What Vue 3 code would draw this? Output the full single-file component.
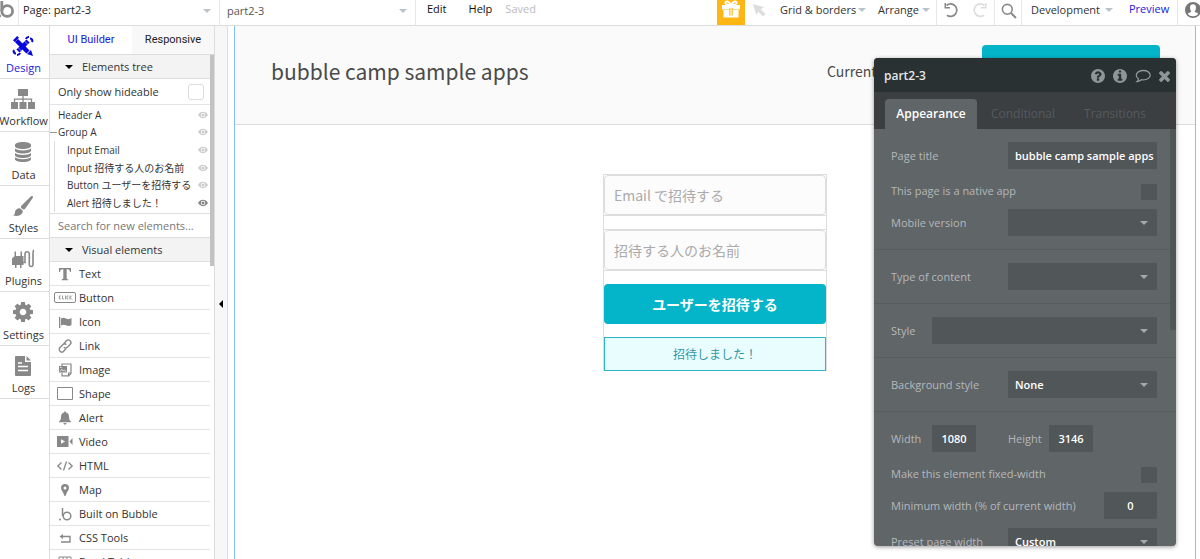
<script setup>
import { ref } from 'vue'

const circle = 'q0 209-103 385.5t-279.5 279.5-385.5 103-385.5-103-279.5-279.5-103-385.5 103-385.5 279.5-279.5 385.5-103 385.5 103 279.5 279.5 103 385.5z'

const icons = {
  design: ['0 0 20 20', '<path d="M3.500 4.500 15 16" stroke="currentColor" stroke-width="4.500"/><path d="M0 4.200 4.200 0 6 1.800 1.800 6z"/><path d="m14 18 4-4 2 6z"/><path d="M5 15 15 5" stroke="currentColor" stroke-width="4.500"/><path d="M3 17.500a2.300 2.300 0 0 1-2-3.500M17 2.500a2.300 2.300 0 0 1 2 3.500M13 3a3 3 0 0 1 3-2M7 17a3 3 0 0 1-3 2" fill="none" stroke="currentColor" stroke-width="2.200"/><path d="m4.500 11 4.500 4.500M11 4.500 15.500 9" stroke="#fff" stroke-width=".5"/>'],
  workflow: ['0 0 24 20', '<path d="M7 0h10v7H7zM0 13h7v7H0zM8.500 13h7v7h-7zM17 13h7v7h-7z"/><path d="M12 7v6M3.500 13v-2.800h17V13" fill="none" stroke="currentColor" stroke-width="1.300"/>'],
  data: ['0 0 16 20', '<path d="M0 2.800C0 1.200 3.600 0 8 0s8 1.200 8 2.800v1.400C16 5.800 12.400 7 8 7S0 5.800 0 4.200zM0 6.600C1.500 7.900 4.500 8.600 8 8.600s6.500-.7 8-2v2.200c0 1.500-3.600 2.700-8 2.700S0 10.300 0 8.800zM0 11c1.500 1.300 4.500 2 8 2s6.500-.7 8-2v2.200c0 1.500-3.600 2.700-8 2.700s-8-1.200-8-2.700zM0 15.200c1.500 1.300 4.500 2 8 2s6.500-.7 8-2v2c0 1.600-3.600 2.800-8 2.800s-8-1.200-8-2.800z"/>'],
  styles: ['0 0 20 20', '<path d="M19.600.3c.6.500.5 1.200.1 1.800l-7.400 10.400c-.7 1-1.800 1.300-2.800.6l-1-.9c-.8-.8-.7-1.900.1-2.800L17.800.5c.6-.5 1.300-.6 1.800-.2zM7 12.200l2.700 2.400c.5 2.300-1.500 4.800-4.500 5.200-1.900.3-3.800 0-5.200-.6 2-.7 1.700-2 2.100-3.800.5-2 2.700-3.600 4.900-3.200z"/>'],
  plugins: ['0 0 22 20', '<path d="M2.500 2.500H4V7h4.500V2.500H10V7h1.500v9H9.500v3H8v-3H4.500v3H3v-3H0V9.500L2.500 7z"/><path d="M11 13.500h2V4.500a2.200 2.200 0 0 1 4.300 0V16a1.900 1.900 0 0 0 3.700 0V4.500c0-2 0-3 1-3.500" fill="none" stroke="currentColor" stroke-width="1.600"/>'],
  settings: ['128 128 1536 1536', '<path d="M1152 896q0-106-75-181t-181-75-181 75-75 181 75 181 181 75 181-75 75-181zm512-109v222q0 12-8 23t-20 13l-185 28q-19 54-39 91 35 50 107 138 10 12 10 25t-9 23q-27 37-99 108t-94 71q-12 0-26-9l-138-108q-44 23-91 38-16 136-29 186-7 28-36 28h-222q-14 0-24.500-8.500t-11.500-21.500l-28-184q-49-16-90-37l-141 107q-10 9-25 9-14 0-25-11-126-114-165-168-7-10-7-23 0-12 8-23 15-21 51-66.500t54-70.500q-27-50-41-99l-183-27q-13-2-21-12.500t-8-23.500v-222q0-12 8-23t19-13l186-28q14-46 39-92-40-57-107-138-10-12-10-24 0-10 9-23 26-36 98.500-107.500t94.500-71.500q13 0 26 10l138 107q44-23 91-38 16-136 29-186 7-28 36-28h222q14 0 24.500 8.500t11.500 21.500l28 184q49 16 90 37l142-107q9-9 24-9 13 0 25 10 129 119 165 170 7 8 7 22 0 12-8 23-15 21-51 66.500t-54 70.500q26 50 41 98l183 28q13 2 21 12.500t8 23.500z"/>'],
  logs: ['0 0 16 20', '<path d="M1 0h9v6h6v13a1 1 0 0 1-1 1H1a1 1 0 0 1-1-1V1a1 1 0 0 1 1-1zm10.500 0L16 4.500h-4.500z"/><path d="M3 7h4M3 10.500h10M3 14.500h10" stroke="#fff" stroke-width="1.300"/>'],
  text: ['0 0 14 14', '<path d="M1 1h12v4h-1c-.3-2-1-2.700-2.800-2.700H8.700v9c0 .9.400 1.100 1.700 1.200v.8H3.600v-.8c1.300-.1 1.700-.3 1.700-1.200v-9h-.5C3 2.300 2.300 3 2 5H1z"/>'],
  button: ['0 0 22 11', '<rect x=".5" y=".5" width="21" height="10" rx="1.500" fill="none" stroke="currentColor"/><path d="M7 4H5.300v3H7M8.500 3.500V7h1.600M11.500 3.500v4M14.500 4H13v3h1.500M16 3.500v4M18 3.500l-2 2 2 2" fill="none" stroke="currentColor" stroke-width=".8"/>'],
  icon: ['0 0 14 14', '<path d="M1 2h1.300v11H1zM3 3.500c2-1.200 3.500-1 5 0s3 .9 5.500-.5v7c-2 1.100-3.500 1.300-5.500.3s-3-.8-5 .2z"/>'],
  link: ['0 0 14 14', '<path d="m6 4.500 2.400-2.700a2.600 2.600 0 0 1 3.700 3.700L9.300 8.300a2.500 2.500 0 0 1-3.500 0M8 9.600l-2.300 2.600A2.600 2.600 0 0 1 2 8.500l2.800-2.800a2.500 2.500 0 0 1 3.500 0" fill="none" stroke="currentColor" stroke-width="1.400"/>'],
  image: ['0 0 14 14', '<path d="M4 3V1h9v9.500l-2.300 2.300H4V10M13 10h-2.500v3" fill="none" stroke="currentColor" stroke-width="1.200"/><path d="M1 3h8v6.500H1z"/><path d="m2 8.500 1.800-2.200L5.300 8l1-1L8 8.500M2 4.500h1.500" fill="none" stroke="#fff" stroke-width=".8"/>'],
  shape: ['0 0 16 13', '<path d="M.5.500h15v12H.5z" fill="none" stroke="currentColor"/>'],
  alert: ['0 0 14 14', '<path d="M7 .5c.7 0 1 .5 1 1 2 .5 3 2 3 4 0 3 .7 4 2 5v.7H1v-.7c1.300-1 2-2 2-5 0-2 1-3.500 3-4 0-.5.300-1 1-1zM5.500 12h3c0 1-.7 1.500-1.500 1.500s-1.500-.5-1.500-1.500z"/>'],
  video: ['0 0 16 11', '<path d="M0 0h11.500v11H0zM12.500 5.500 15.500 2v7z"/><path d="M4 3.200 8 5.500 4 7.800z" fill="#fff"/>'],
  html: ['0 0 16 10', '<path d="m4.500 1.500-3.700 3.500 3.700 3.500M11.500 1.500l3.700 3.500-3.700 3.500M9.500.5l-3 9" fill="none" stroke="currentColor" stroke-width="1.300"/>'],
  map: ['0 0 14 14', '<path fill-rule="evenodd" d="M7 1a4 4 0 0 1 4 4c0 2.200-2.500 4.300-3.300 7.500-.2.700-1.200.7-1.400 0C5.500 9.300 3 7.200 3 5a4 4 0 0 1 4-4zm0 2.500a1.500 1.500 0 1 0 0 3 1.500 1.500 0 0 0 0-3z"/>'],
  bubble: ['0 0 14 14', '<circle cx="9" cy="9" r="3.800" fill="none" stroke="currentColor" stroke-width="1.500"/><path d="M4.500 1v8" stroke="currentColor" stroke-width="1.500"/><circle cx="2" cy="12.500" r="1"/>'],
  css: ['0 0 14 14', '<path d="M4.500 5.500H12V11H3" fill="none" stroke="currentColor" stroke-width="1.400"/><path d="M1.500 5.500 5 3v5z"/>'],
  table: ['0 0 14 14', '<path d="M1 2h12v10H1zM1 5.500h12M5 2v10M9 2v10" fill="none" stroke="currentColor"/>'],
  eye: ['0 0 10 8', '<path fill-rule="evenodd" d="M0 4c1.300-2 3-3.200 5-3.200S8.700 2 10 4C8.700 6 7 7.200 5 7.200S1.300 6 0 4zm5-2.200a2.200 2.200 0 1 0 0 4.400 2.200 2.200 0 0 0 0-4.400z"/><circle cx="5" cy="4" r="1.500"/>'],
  gift: ['0 0 20 18', '<path d="M1 5h18v4.500H1zM2.500 10h15v7.500h-15z"/><path d="M9 5C5 5 4.300 3.800 4.300 2.500S7.600.3 10 5C12.400.3 15.700 1.200 15.700 2.500S15 5 11 5" fill="none" stroke="currentColor" stroke-width="1.800"/><path d="M8.300 8h3.400v7.500H8.300z" fill="#fdb614"/><path d="M9.400 8h1.200v7.500H9.400z"/>'],
  pointer: ['0 0 14 14', '<path d="M1 1 12 4.300 8.700 6.300l4.800 4.800-2.400 2.400-4.800-4.800-2 3.300z"/>'],
  undo: ['0 0 16 16', '<path d="M3.500 3.500a6.200 6.200 0 1 1 .5 9.700" fill="none" stroke="currentColor" stroke-width="1.700"/><path d="M1.500 1v5.500H7V5H3V1z"/>'],
  search: ['0 0 16 16', '<circle cx="6.300" cy="6.300" r="4.900" fill="none" stroke="currentColor" stroke-width="1.600"/><path d="m10 10 5 5" stroke="currentColor" stroke-width="2"/>'],
  user: ['0 0 16 16', '<path fill-rule="evenodd" d="M8 0a8 8 0 1 1 0 16A8 8 0 0 1 8 0zM5 5.500C5 8 6 9 6.300 9.500c.3 1-3 1-3.500 2.500A6.300 6.300 0 0 0 8 14.300a6.300 6.300 0 0 0 5.200-2.300c-.5-1.500-3.800-1.500-3.500-2.500C10 9 11 8 11 5.500 11 3.500 9.700 2.300 8 2.300S5 3.500 5 5.500z"/>'],
  help: ['128 128 1536 1536', `<path d="M1024 1376v-192q0-14-9-23t-23-9h-192q-14 0-23 9t-9 23v192q0 14 9 23t23 9h192q14 0 23-9t9-23zm256-672q0-88-55.500-163t-138.500-116-170-41q-243 0-371 213-15 24 8 42l132 100q7 6 19 6 16 0 25-12 53-68 86-92 34-24 86-24 48 0 85.500 26t37.500 59q0 38-20 61t-68 45q-63 28-115.500 86.500t-52.500 125.500v36q0 14 9 23t23 9h192q14 0 23-9t9-23q0-19 21.500-49.500t54.500-49.500q32-18 49-28.500t46-35 44.500-48 28-60.500 12.500-81zm384 192${circle}"/>`],
  info: ['128 128 1536 1536', `<path d="M1152 1376v-160q0-14-9-23t-23-9h-96v-512q0-14-9-23t-23-9h-320q-14 0-23 9t-9 23v160q0 14 9 23t23 9h96v320h-96q-14 0-23 9t-9 23v160q0 14 9 23t23 9h448q14 0 23-9t9-23zm-128-896v-160q0-14-9-23t-23-9h-192q-14 0-23 9t-9 23v160q0 14 9 23t23 9h192q14 0 23-9t9-23zm640 416${circle}"/>`],
  comment: ['0 0 16 14', '<path d="M8.300 1.500c3.800 0 6.900 2 6.900 4.700s-3.100 4.700-6.900 4.700c-.7 0-1.300 0-1.900-.2-1 1-2.400 1.600-4.200 1.800.9-.8 1.200-1.700 1.200-2.800C2.200 8.800 1.300 7.600 1.300 6.200c0-2.700 3.100-4.700 7-4.700z" fill="none" stroke="currentColor" stroke-width="1.300"/>'],
  close: ['302 366 1188 1188', '<path d="M1490 1322q0 40-28 68l-136 136q-28 28-68 28t-68-28l-294-294-294 294q-28 28-68 28t-68-28l-136-136q-28-28-28-68t28-68l294-294-294-294q-28-28-28-68t28-68l136-136q28-28 68-28t68 28l294 294 294-294q28-28 68-28t68 28l136 136q28 28 28 68t-28 68l-294 294 294 294q28 28 28 68z"/>'],
}

const rail = [
  ['design', 'Design'], ['workflow', 'Workflow'], ['data', 'Data'], ['styles', 'Styles'],
  ['plugins', 'Plugins'], ['settings', 'Settings'], ['logs', 'Logs'],
]
const tree = [
  { name: 'Header A', level: 0 },
  { name: 'Group A', level: 0, open: true },
  { name: 'Input Email', level: 1 },
  { name: 'Input 招待する人のお名前', level: 1 },
  { name: 'Button ユーザーを招待する', level: 1 },
  { name: 'Alert 招待しました！', level: 1, strong: true },
]
const elements = [
  ['text', 'Text', 14], ['button', 'Button', 22], ['icon', 'Icon', 14], ['link', 'Link', 14],
  ['image', 'Image', 14], ['shape', 'Shape', 16], ['alert', 'Alert', 14], ['video', 'Video', 16],
  ['html', 'HTML', 16], ['map', 'Map', 14], ['bubble', 'Built on Bubble', 14],
  ['css', 'CSS Tools', 14], ['table', 'Excel Table', 14],
]
const title = ref('bubble camp sample apps')
const width = ref('1080')
const height = ref('3146')
const minWidth = ref('0')
</script>

<template>
  <div class="app">
    <header class="topbar">
      <svg class="logo" viewBox="0 0 18 24" aria-hidden="true">
        <circle cx="7.200" cy="11" r="5.400" fill="none" stroke="currentColor" stroke-width="2.800" />
        <path d="M1.800 1v10" stroke="currentColor" stroke-width="2.800" />
        <circle cx="-.5" cy="16" r="1.500" />
      </svg>
      <div class="pick dark"><select aria-label="Page"><option>Page: part2-3</option></select><i class="caret"></i></div>
      <div class="pick second"><select aria-label="Element"><option>part2-3</option></select><i class="caret"></i></div>
      <nav class="menu">
        <a href="#">Edit</a><a href="#">Help</a><span class="saved">Saved</span>
      </nav>
      <button class="gift" aria-label="Gift"><svg :viewBox="icons.gift[0]" v-html="icons.gift[1]"></svg></button>
      <button class="pointer" aria-label="Select"><svg :viewBox="icons.pointer[0]" v-html="icons.pointer[1]"></svg></button>
      <button class="drop grid">Grid &amp; borders<i class="caret"></i></button>
      <button class="drop arrange">Arrange<i class="caret"></i></button>
      <div class="history">
        <button aria-label="Undo"><svg :viewBox="icons.undo[0]" v-html="icons.undo[1]"></svg></button>
        <button class="redo" aria-label="Redo"><svg :viewBox="icons.undo[0]" v-html="icons.undo[1]"></svg></button>
      </div>
      <button class="find" aria-label="Search"><svg :viewBox="icons.search[0]" v-html="icons.search[1]"></svg></button>
      <button class="drop version">Development<i class="caret"></i></button>
      <a class="preview" href="#">Preview</a>
      <button class="user" aria-label="User"><svg :viewBox="icons.user[0]" v-html="icons.user[1]"></svg></button>
    </header>

    <div class="work">
      <nav class="rail">
        <a v-for="([icon, label], i) in rail" :key="icon" href="#" :class="{ on: i === 0 }">
          <svg :viewBox="icons[icon][0]" v-html="icons[icon][1]"></svg>
          <span>{{ label }}</span>
        </a>
      </nav>

      <aside class="palette">
        <div class="tabs">
          <button class="on">UI Builder</button><button>Responsive</button>
        </div>
        <div class="scroll">
          <div class="list">
            <button class="group"><i class="caret black"></i>Elements tree</button>
            <label class="hideable">Only show hideable<input type="checkbox"></label>
            <ul class="tree">
              <li v-for="n in tree" :key="n.name" :class="{ child: n.level, open: n.open, strong: n.strong }">
                <span>{{ n.name }}</span>
                <svg :viewBox="icons.eye[0]" v-html="icons.eye[1]"></svg>
              </li>
            </ul>
            <input class="search" type="text" placeholder="Search for new elements..." aria-label="Search for new elements">
            <button class="group"><i class="caret black"></i>Visual elements</button>
            <ul class="elements">
              <li v-for="[icon, label, w] in elements" :key="label">
                <span class="glyph"><svg :viewBox="icons[icon][0]" :style="{ width: w + 'px' }" v-html="icons[icon][1]"></svg></span>{{ label }}
              </li>
            </ul>
          </div>
          <div class="thumb"></div>
        </div>
      </aside>
      <button class="collapse" aria-label="Collapse"><i></i></button>

      <main class="canvas">
        <div class="page">
          <header class="hero">
            <h1>bubble camp sample apps</h1>
            <p>Current</p>
            <button></button>
          </header>
          <form class="invite" @submit.prevent>
            <div class="field"><input type="email" placeholder="Email で招待する" aria-label="Email で招待する"></div>
            <div class="field"><input type="text" placeholder="招待する人のお名前" aria-label="招待する人のお名前"></div>
            <button>ユーザーを招待する</button>
            <p role="alert">招待しました！</p>
          </form>
        </div>
      </main>
    </div>

    <section class="props">
      <header>
        <h2>part2-3</h2>
        <button aria-label="Help"><svg :viewBox="icons.help[0]" v-html="icons.help[1]"></svg></button>
        <button aria-label="Info"><svg :viewBox="icons.info[0]" v-html="icons.info[1]"></svg></button>
        <button class="wide" aria-label="Comment"><svg :viewBox="icons.comment[0]" v-html="icons.comment[1]"></svg></button>
        <button class="small" aria-label="Close"><svg :viewBox="icons.close[0]" v-html="icons.close[1]"></svg></button>
      </header>
      <div class="ptabs">
        <button class="on">Appearance</button><button>Conditional</button><button>Transitions</button>
      </div>
      <div class="body">
        <div class="section">
          <div class="row"><label for="title">Page title</label><input id="title" v-model="title" class="main"></div>
          <div class="row check"><label for="native">This page is a native app</label><input id="native" type="checkbox"></div>
          <div class="row"><label for="mobile">Mobile version</label><div class="sel main"><select id="mobile"><option></option></select><i class="caret"></i></div></div>
        </div>
        <div class="section">
          <div class="row"><label for="type">Type of content</label><div class="sel main"><select id="type"><option></option></select><i class="caret"></i></div></div>
        </div>
        <div class="section">
          <div class="row"><label for="style">Style</label><div class="sel long"><select id="style"><option></option></select><i class="caret"></i></div></div>
        </div>
        <div class="section">
          <div class="row"><label for="bg">Background style</label><div class="sel main"><select id="bg"><option>None</option></select><i class="caret"></i></div></div>
        </div>
        <div class="section">
          <div class="row size">
            <label for="w">Width</label><input id="w" v-model="width">
            <label for="h">Height</label><input id="h" v-model="height">
          </div>
          <div class="row check"><label for="fixed">Make this element fixed-width</label><input id="fixed" type="checkbox"></div>
          <div class="row"><label for="min">Minimum width (% of current width)</label><input id="min" v-model="minWidth" class="short"></div>
          <div class="row preset"><label for="preset">Preset page width</label><div class="sel main"><select id="preset"><option>Custom</option></select><i class="caret"></i></div></div>
        </div>
        <div class="thumb"></div>
      </div>
    </section>
  </div>
</template>

<style>
body { margin: 0; overflow: hidden; }
</style>

<style scoped>
* { box-sizing: border-box; }
.app {
  position: relative;
  display: flex;
  flex-direction: column;
  height: 100vh;
  overflow: hidden;
  background: #fff;
  color: #333;
  font: 11px/16px "Open Sans", "Noto Sans CJK JP", sans-serif;
}
button, input, select { font: inherit; color: inherit; border: 0; margin: 0; padding: 0; background: none; border-radius: 0; outline: 0; }
select, input { appearance: none; min-width: 0; }
a { color: inherit; text-decoration: none; }
ul { list-style: none; margin: 0; padding: 0; }
h1, h2, p { margin: 0; font-weight: 400; }
svg { display: block; fill: currentColor; overflow: visible; }
.caret { flex: none; width: 0; height: 0; border: 4px solid transparent; border-top-color: #b9c3cb; border-bottom: 0; }
.caret.black { border-top-color: #000; }

/* top bar */
.topbar { flex: none; display: flex; align-items: stretch; height: 26px; border-bottom: 1px solid #ddd; white-space: nowrap; }
.topbar > * { flex: none; }
.topbar svg { width: 16px; height: 16px; }
.topbar .logo { width: 18px; height: 24px; color: #8a8a8a; overflow: hidden; }
.pick { position: relative; display: flex; align-items: flex-start; width: 201px; border-left: 1px solid #e8e8e8; color: #555; }
.pick.second { width: 197px; border-right: 1px solid #e8e8e8; }
.pick.dark { color: #222; }
.pick select { width: 100%; height: 20px; padding: 0 20px 0 4px; }
.pick.second select { height: 21px; padding: 0 20px 0 7px; }
.pick .caret { position: absolute; right: 8px; top: 9px; }
.menu { display: flex; padding: 1px 0 0 11px; color: #111; }
.menu a { margin-right: 22px; }
.menu .saved { margin-left: -9px; color: #bbb; }
.topbar .gift { display: flex; justify-content: center; width: 28px; margin-left: auto; background: #fdb614; color: #fff; }
.topbar .gift svg { width: 20px; height: 18px; }
.topbar .pointer { display: flex; align-items: flex-start; width: 35px; padding: 3px 0 0 7px; color: #ddd; }
.topbar .pointer svg { width: 14px; height: 14px; }
.drop { display: flex; align-items: center; justify-content: space-between; padding-bottom: 5px; }
.grid { width: 86px; }
.arrange { width: 52px; margin-left: 12px; }
.version { width: 82px; margin-left: 9px; padding-bottom: 6px; }
.history { display: flex; align-items: flex-start; gap: 13px; width: 58px; margin-left: 6px; padding: 2px 0 0 6px; border-left: 1px solid #e8e8e8; color: #888; }
.redo { color: #ddd; transform: scaleX(-1); }
.find { display: flex; align-items: flex-start; width: 28px; padding: 3px 0 0 6px; border: solid #e8e8e8; border-width: 0 1px; color: #888; }
.preview { width: 48px; margin-left: 16px; padding-top: 1px; color: #2419d8; }
.user { display: flex; align-items: flex-start; width: 23px; padding: 2px 0 0 7px; border-left: 1px solid #e8e8e8; color: #777; }

.work { flex: 1; min-height: 0; display: flex; }

/* navigation rail */
.rail { flex: none; width: 50px; border-right: 1px solid #ddd; color: #333; }
.rail a { display: flex; flex-direction: column; align-items: center; justify-content: space-between; height: 53px; padding: 10px 0 2px; border-bottom: 1px solid #ddd; }
.rail a:nth-child(3n) { height: 54px; }
.rail a > span { margin-left: -2px; }
.rail svg { width: 24px; height: 20px; margin-left: -3px; color: #888; }
.rail .on { color: #2419d8; }
.rail .on svg { color: #0808dc; }

/* palette */
.palette { flex: none; display: flex; flex-direction: column; width: 165px; border-right: 1px solid #ddd; }
.tabs { flex: none; display: flex; height: 29px; border-bottom: 1px solid #ddd; font-family: Roboto, sans-serif; }
.tabs button { flex: 1; background: #f8f8f8; color: #222; }
.tabs .on { background: #fff; color: #2419d8; }
.scroll { flex: 1; min-height: 0; display: flex; overflow: hidden; }
.list { flex: 1; min-width: 0; }
.scroll .thumb { flex: none; width: 4px; height: 211px; background: #c2c2c2; }
.group { display: flex; align-items: center; gap: 9px; width: 100%; height: 24px; padding-left: 15px; background: #f3f3f3; border-bottom: 1px solid #ddd; }
.hideable { display: flex; align-items: center; justify-content: space-between; height: 26px; padding: 0 6px 0 8px; border-bottom: 1px solid #e4e4e4; }
.hideable input { width: 16px; height: 16px; border: 1px solid #ddd; border-radius: 3px; }
.tree { display: grid; grid-auto-rows: 1fr; height: 109px; padding: 1px 0; border-bottom: 1px solid #ddd; font-size: 10px; }
.tree li { display: flex; align-items: center; justify-content: space-between; padding: 0 2px 0 8px; white-space: nowrap; }
.tree li.child { margin-left: 4px; padding-left: 12px; border-left: 1px solid #ddd; }
.tree li.open::before { content: ""; width: 7px; height: 1px; margin: 0 1px 0 -8px; background: #999; }
.tree li.open span { flex: 1; }
.tree svg { width: 10px; height: 8px; color: #ccc; }
.tree .strong svg { color: #888; }
.search { display: block; width: 100%; height: 24px; padding: 0 0 0 8px; border-bottom: 1px solid #ddd; }
.search::placeholder { color: #777; opacity: 1; }
.elements li { display: flex; align-items: center; height: 24px; border-bottom: 1px solid #e4e4e4; }
.glyph { display: flex; justify-content: center; width: 29px; color: #888; }
.collapse { flex: none; width: 13px; padding: 22px 0 0 4px; background: #f7f7f7; border-right: 1px solid #ddd; }
.collapse i { display: block; width: 0; border: 4px solid transparent; border-right-color: #000; border-left: 0; }

/* page being edited */
.canvas { flex: 1; min-width: 0; display: flex; padding: 0 4px 0 6px; }
.page { flex: 1; border: solid #84c1fb; border-width: 0 1px; font-family: "Noto Sans CJK JP", sans-serif; }
.hero { display: flex; align-items: center; height: 99px; padding: 0 35px 8px 36px; background: #fafafa; border-bottom: 1px solid #ddd; color: #4a4a4a; }
.hero h1 { font-size: 21px; line-height: 32px; margin-right: auto; }
.hero p { width: 155px; font-size: 14px; line-height: 20px; }
.hero button { width: 178px; height: 52px; border-radius: 4px; background: #04b5c9; }
.invite { display: flex; flex-direction: column; gap: 13px; width: 224px; margin: 49px auto 0; border: solid #ddd; border-width: 0 1px; }
.field { height: 42px; border: solid #ddd; border-width: 1px 0; }
.field input { display: block; width: 100%; height: 40px; padding: 0 9px; border: 1px solid #ddd; border-radius: 4px; background: #fcfcfc; font-size: 14px; }
.field input::placeholder { color: #aaa; opacity: 1; }
.invite button { height: 40px; border-radius: 4px; background: #04b5c9; color: #fff; font-size: 14px; font-weight: 700; }
.invite p { height: 34px; border: 1px solid #2ab8c8; background: #e9fdff; color: #3097a5; font-size: 12px; line-height: 32px; text-align: center; }

/* property editor window */
.props { position: absolute; top: 58px; right: 24px; bottom: 13px; width: 302px; display: flex; flex-direction: column; overflow: hidden; border-radius: 4px; background: #606568; color: #b4b8ba; box-shadow: 0 1px 4px rgba(0, 0, 0, .4); }
.props header { flex: none; display: flex; align-items: center; gap: 8px; height: 34px; padding: 2px 6px 0 10px; background: #2a3133; color: #8f9699; }
.props h2 { margin-right: auto; font-size: 12px; font-weight: 600; color: #e4e7e8; }
.props header svg { width: 14px; height: 14px; }
.props header .wide svg { width: 16px; }
.props header .small svg { width: 11px; height: 11px; }
.ptabs { flex: none; display: flex; align-items: flex-end; height: 37px; padding: 0 11px; background: #3b3f42; }
.ptabs button { width: 92px; height: 30px; border-radius: 4px 4px 0 0; color: #555a5d; font-size: 12px; }
.ptabs .on { background: #606568; color: #fff; font-weight: 600; }
.body { position: relative; flex: 1; min-height: 0; overflow: hidden; }
.body .thumb { position: absolute; top: 0; right: 0; width: 6px; height: 201px; background: #505558; }
.section { padding: 13px 19px 13px 17px; border-bottom: 1px solid #585d60; }
.row { display: flex; align-items: center; justify-content: space-between; height: 27px; white-space: nowrap; }
.row.check { align-items: flex-start; height: 16px; margin: 15px 0 9px; }
.row.check label { margin-top: -1px; }
.row.preset { margin-top: 9px; }
.row input, .sel { background: #515659; color: #fff; font-weight: 600; height: 27px; }
.row input { padding: 0 0 0 7px; }
.row .main { width: 149px; }
.row.check input { width: 16px; height: 16px; padding: 0; }
.row .long { width: 225px; }
.row .short { width: 53px; padding: 0; text-align: center; }
.row.size { justify-content: flex-start; }
.size input { width: 44px; padding: 0; text-align: center; margin-right: 32px; }
.size label { width: 41px; }
.sel { display: flex; align-items: center; padding-right: 9px; }
.sel select { flex: 1; height: 27px; padding: 0 7px; }
.sel .caret { border-top-color: #a4a9ab; }
</style>
